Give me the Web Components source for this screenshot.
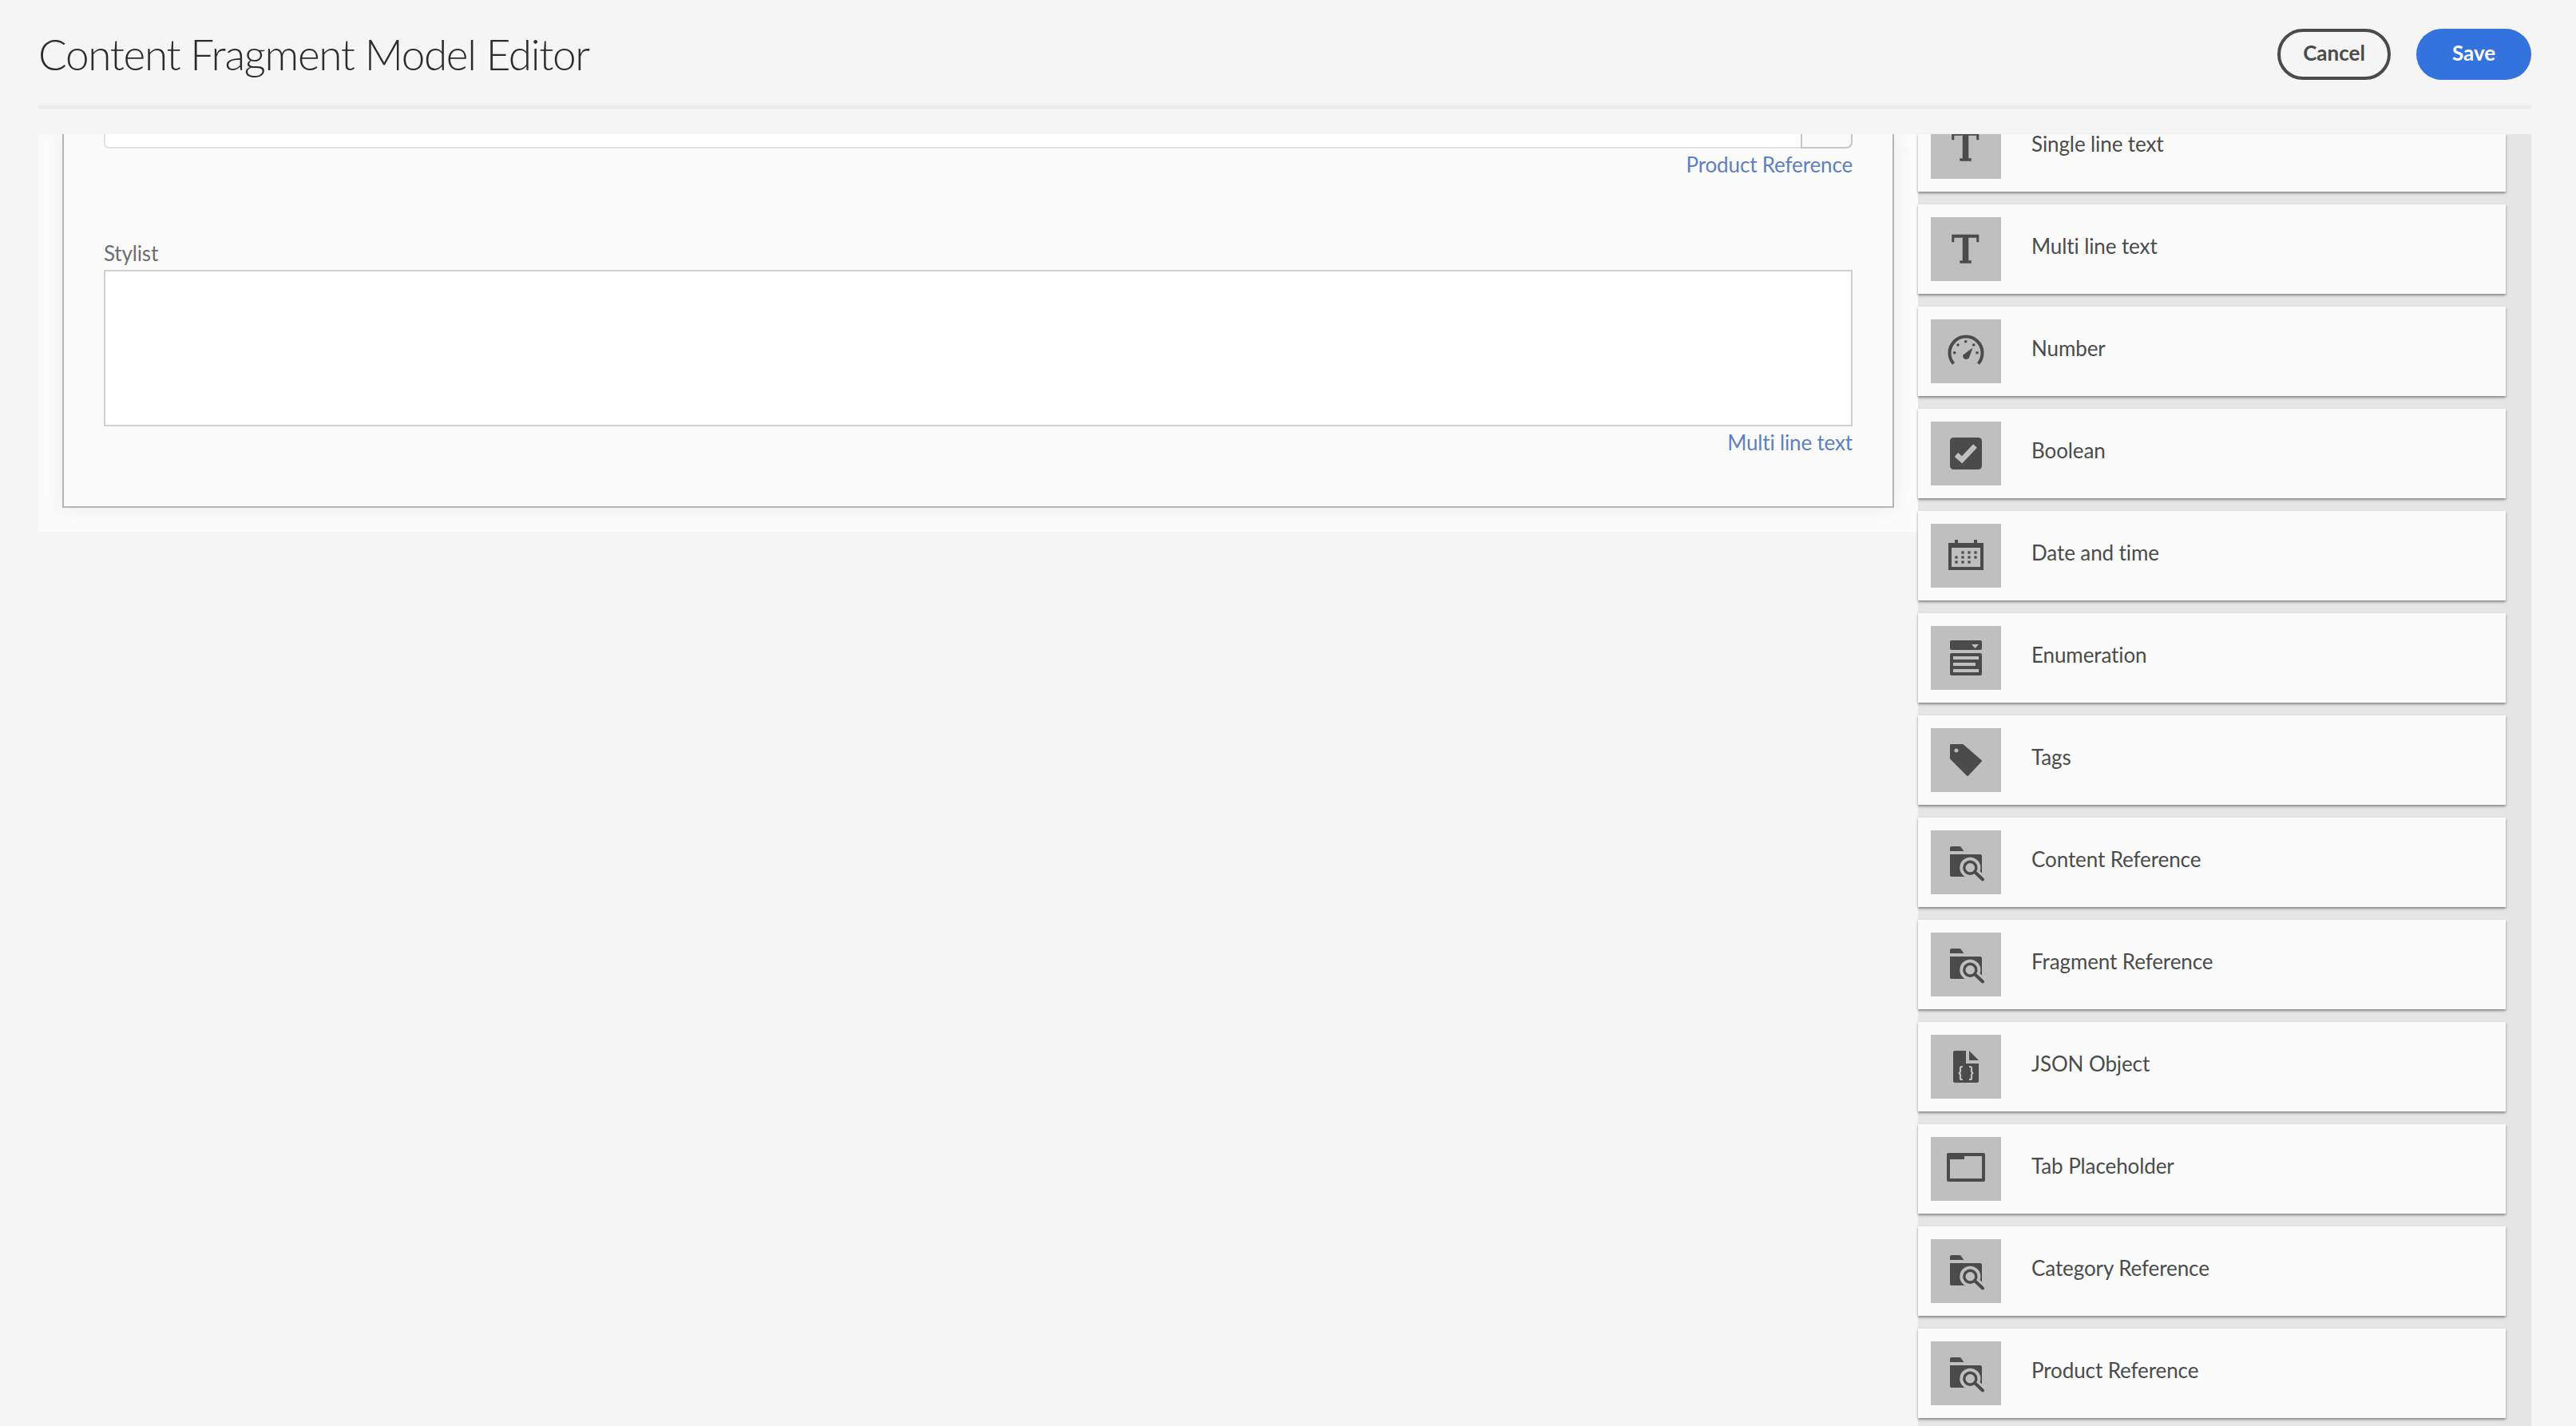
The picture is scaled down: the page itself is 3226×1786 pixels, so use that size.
<!DOCTYPE html>
<html>
<head>
<meta charset="utf-8">
<title>Content Fragment Model Editor</title>
<style>
  html, body { margin: 0; height: 100%; }
  body { background: #f5f5f5; overflow: hidden; font-family: Lato, "Liberation Sans", sans-serif; }
</style>
</head>
<body>

<cf-editor>
  <cf-header slot="header" heading="Content Fragment Model Editor"></cf-header>

  <cf-panel slot="form">
    <cf-field kind="clipped" type="Product Reference"></cf-field>
    <cf-field kind="multi" label="Stylist" type="Multi line text"></cf-field>
  </cf-panel>

  <cf-palette slot="palette">
    <cf-item icon="t" cut>Single line text</cf-item>
    <cf-item icon="t">Multi line text</cf-item>
    <cf-item icon="number">Number</cf-item>
    <cf-item icon="boolean">Boolean</cf-item>
    <cf-item icon="date">Date and time</cf-item>
    <cf-item icon="enum">Enumeration</cf-item>
    <cf-item icon="tag">Tags</cf-item>
    <cf-item icon="folder">Content Reference</cf-item>
    <cf-item icon="folder">Fragment Reference</cf-item>
    <cf-item icon="json">JSON Object</cf-item>
    <cf-item icon="tab">Tab Placeholder</cf-item>
    <cf-item icon="folder">Category Reference</cf-item>
    <cf-item icon="folder">Product Reference</cf-item>
  </cf-palette>
</cf-editor>

<script>
const TILE = '#bfbfbf';
const INK = '#4b4b4b';

// all drawn in a 48 box, same as the 24px icons at 2x
const ICONS = {
  t: `<path fill="${INK}" stroke="${INK}" stroke-width=".5" stroke-linejoin="round" d="M6.500 6h33.500v9h-2.500v-5.500H27v29h3.500v3H16.500v-3H20v-29H9v5.500H6.500z"/>`,
  number: `<path fill="none" stroke="${INK}" stroke-width="4" d="M8.500 39.500A20.500 20.500 0 1 1 39.500 39.500"/>
    <g fill="${INK}"><circle cx="9.700" cy="25.700" r="1.800"/><circle cx="14" cy="16" r="1.800"/><circle cx="23.700" cy="11.700" r="1.800"/><circle cx="33.700" cy="16" r="1.800"/><circle cx="38" cy="25.700" r="1.800"/>
    <path d="M32.500 19.500 28 32a4.200 4.200 0 0 1-7.600-3.400z"/></g>`,
  boolean: `<rect x="4" y="4" width="40" height="40" rx="4.500" fill="${INK}"/>
    <path fill="none" stroke="${TILE}" stroke-width="6.500" d="M12 25.500l7 6.500L35.500 14.500"/>`,
  date: `<path fill="${INK}" fill-rule="evenodd" d="M2 8h8V4h4v4h20V4h4v4h8v34H2zM6 14v24h36V14z"/>
    <g fill="${INK}">
      ${[[20,19],[28,19],[36,19],[12,25],[20,25],[28,25],[36,25],[12,31],[20,31],[28,31]].map(([x, y]) => `<rect x="${x-1.6}" y="${y-.6}" width="3.200" height="3.200"/>`).join('')}
    </g>`,
  enum: `<rect x="4" y="2" width="40" height="12" rx="2" fill="${INK}"/>
    <path fill="${TILE}" d="M31 7h9l-4.500 5z"/>
    <rect x="4" y="18" width="40" height="28" rx="2" fill="${INK}"/>
    <g fill="${TILE}"><rect x="8" y="22" width="32" height="4"/><rect x="8" y="30" width="28" height="4"/><rect x="8" y="38" width="32" height="4"/></g>`,
  tag: `<path fill="${INK}" fill-rule="evenodd" stroke="${INK}" stroke-width="2" stroke-linejoin="round" d="M5 5h15L43 25 26 43 5 22zM12 8.500a3.500 3.500 0 1 0 0 7 3.500 3.500 0 0 0 0-7z"/>`,
  folder: `<path fill="${INK}" d="M4 6a2 2 0 0 1 2-2h11l4.500 6H4zM4 14h38a2 2 0 0 1 2 2v24a2 2 0 0 1-2 2H6a2 2 0 0 1-2-2z"/>
    <circle cx="29.300" cy="30.700" r="13" fill="${TILE}"/>
    <path stroke="${TILE}" stroke-width="9" stroke-linecap="round" d="M38 38l8 8"/>
    <circle cx="29.300" cy="30.700" r="7.500" fill="none" stroke="${INK}" stroke-width="3.500"/>
    <path stroke="${INK}" stroke-width="4" stroke-linecap="round" d="M36 37l9 8.500"/>`,
  json: `<path fill="${INK}" d="M8 6a2 2 0 0 1 2-2h14v16h16v22a2 2 0 0 1-2 2H10a2 2 0 0 1-2-2z"/>
    <path fill="${INK}" d="M28 4l12 12H28z"/>
    <path fill="none" stroke="${TILE}" stroke-width="2.200" d="M20 24h-1.500q-1.500 0-1.500 1.500v4q0 2-2 2.500 2 .5 2 2.500v4q0 1.500 1.500 1.500H20M28 24h1.500q1.500 0 1.500 1.500v4q0 2 2 2.500-2 .5-2 2.500v4q0 1.500-1.500 1.500H28"/>`,
  tab: `<path fill="${INK}" fill-rule="evenodd" d="M2 4h44a2 2 0 0 1 2 2v32a2 2 0 0 1-2 2H2a2 2 0 0 1-2-2V6a2 2 0 0 1 2-2zM4 12v24h40V12z"/>
    <rect x="22" y="8" width="22" height="4" fill="${TILE}"/>`
};

class CfEditor extends HTMLElement {
  constructor() {
    super();
    this.attachShadow({ mode: 'open' });
    this.shadowRoot.innerHTML = `
      <style>
        :host { display: flex; flex-direction: column; height: 100vh; padding: 0 56px 0 48px; box-sizing: border-box; }
        .body { flex: 1; min-height: 0; display: flex; margin-top: 32px; }
        .left { width: 2354px; flex: none; }
        .right { flex: 1; min-width: 0; }
      </style>
      <slot name="header"></slot>
      <div class="body">
        <div class="left"><slot name="form"></slot></div>
        <div class="right"><slot name="palette"></slot></div>
      </div>
    `;
  }
}

class CfHeader extends HTMLElement {
  constructor() {
    super();
    this.attachShadow({ mode: 'open' });
  }
  connectedCallback() {
    this.shadowRoot.innerHTML = `
      <style>
        :host { display: flex; align-items: center; justify-content: space-between; height: 132px; border-bottom: 4px solid #ebebeb; }
        h1 { margin: 4px 0 0; font: 300 53px/64px Lato, sans-serif; letter-spacing: -1.3px; color: #2c2c2c; }
        .actions { display: flex; gap: 32px; margin-top: 4px; }
        button { height: 64px; border-radius: 32px; font: 700 26px Lato, sans-serif; box-sizing: border-box; padding: 0 0 4px; }
        .cancel { width: 142px; background: transparent; border: 4px solid ${INK}; color: ${INK}; }
        .save { width: 144px; background: #3473de; border: 0; color: #fff; }
      </style>
      <h1>${this.getAttribute('heading')}</h1>
      <div class="actions">
        <button class="cancel">Cancel</button>
        <button class="save">Save</button>
      </div>
    `;
  }
}

class CfPanel extends HTMLElement {
  constructor() {
    super();
    this.attachShadow({ mode: 'open' });
    this.shadowRoot.innerHTML = `
      <style>
        :host { display: block; background: #fbfbfb; padding: 0 30px 30px; height: 498px; box-sizing: border-box; overflow: hidden; }
        .card { height: 468px; box-sizing: border-box; background: #fbfbfb; border: 2px solid #b4b4b4; border-top: 0; padding: 0 50px; box-shadow: 0 0 24px rgba(0,0,0,.07); }
      </style>
      <div class="card"><slot></slot></div>
    `;
  }
}

class CfField extends HTMLElement {
  constructor() {
    super();
    this.attachShadow({ mode: 'open' });
  }
  connectedCallback() {
    const clipped = this.getAttribute('kind') === 'clipped';
    const label = this.getAttribute('label');
    this.shadowRoot.innerHTML = `
      <style>
        :host { display: block; font: 400 26px/32px Lato, sans-serif; letter-spacing: -.15px; }
        .label { color: #6e6e6e; height: 32px; margin-top: 79px; }
        .multi { background: #fff; border: 2px solid #cfcfcf; box-sizing: border-box; height: 196px; margin-top: 5px; }
        .clipped { display: flex; height: 18px; }
        .clipped .input { flex: 1; background: #fff; border: 2px solid #e2e2e2; border-top: 0; border-right: 0; border-radius: 0 0 0 6px; }
        .clipped .btn { width: 65px; box-sizing: border-box; background: #fafafa; border: 2px solid #c6c6c6; border-top: 0; border-radius: 0 0 8px 0; }
        .type { color: #5f7fc0; text-align: right; height: 32px; margin-top: 4px; }
      </style>
      ${label ? `<div class="label">${label}</div>` : ''}
      ${clipped
        ? '<div class="clipped"><div class="input"></div><div class="btn"></div></div>'
        : '<div class="multi"></div>'}
      <div class="type">${this.getAttribute('type')}</div>
    `;
  }
}

class CfPalette extends HTMLElement {
  constructor() {
    super();
    this.attachShadow({ mode: 'open' });
    this.shadowRoot.innerHTML = `
      <style>
        :host { display: block; height: 100%; background: #e5e5e5; }
        .list { display: flex; flex-direction: column; gap: 16px; padding-right: 32px; }
      </style>
      <div class="list"><slot></slot></div>
    `;
  }
}

class CfItem extends HTMLElement {
  constructor() {
    super();
    this.attachShadow({ mode: 'open' });
  }
  connectedCallback() {
    this.shadowRoot.innerHTML = `
      <style>
        :host { display: flex; align-items: center; height: 112px; box-sizing: border-box; padding: 0 16px; background: #fbfbfb; box-shadow: 0 2px 3px rgba(0,0,0,.42); }
        .tile { width: 88px; height: 80px; flex: none; background: ${TILE}; display: flex; align-items: center; justify-content: center; }
        svg { width: 48px; height: 48px; flex: none; display: block; }
        .name { margin: -8px 0 0 38px; color: ${INK}; font: 400 26px/24px Lato, sans-serif; letter-spacing: -.1px; }
        /* first row is scrolled part way under the header */
        :host([cut]) { height: 72px; align-items: flex-start; }
        :host([cut]) .tile { height: 56px; box-sizing: border-box; padding-bottom: 16px; align-items: flex-end; overflow: hidden; }
        :host([cut]) .name { margin-top: 0; }
      </style>
      <div class="tile"><svg viewBox="0 0 48 48">${ICONS[this.getAttribute('icon')]}</svg></div>
      <div class="name"><slot></slot></div>
    `;
  }
}

customElements.define('cf-editor', CfEditor);
customElements.define('cf-header', CfHeader);
customElements.define('cf-panel', CfPanel);
customElements.define('cf-field', CfField);
customElements.define('cf-palette', CfPalette);
customElements.define('cf-item', CfItem);
</script>
</body>
</html>
